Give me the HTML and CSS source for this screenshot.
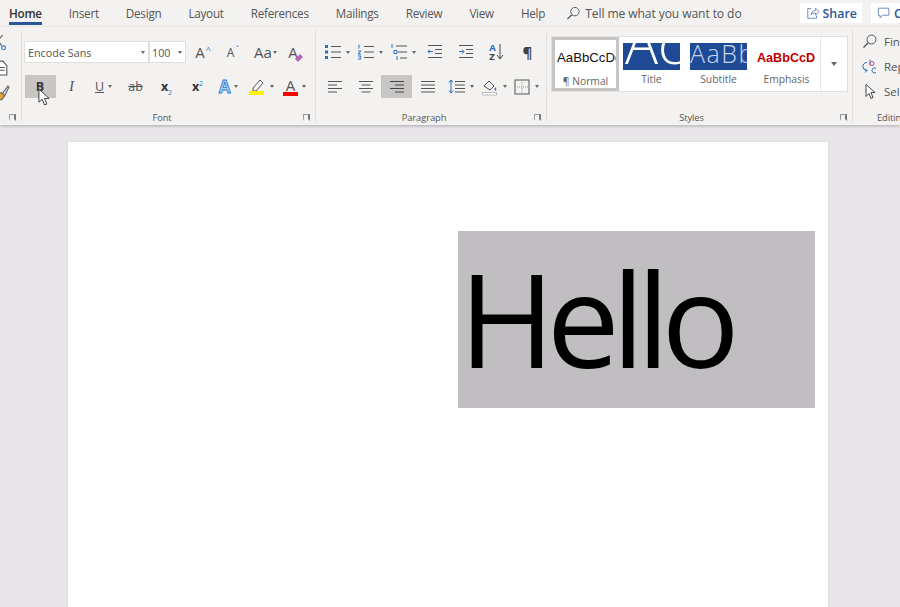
FILE: index.html
```html
<!DOCTYPE html>
<html lang="en">
<head>
    <meta charset="UTF-8">
    <title>Hello - Word</title>
    <link rel="stylesheet" href="styles.css">
</head>
<body>
    <div class="tabs">
        <span class="tab tab-active">Home</span>
        <span class="tab">Insert</span>
        <span class="tab">Design</span>
        <span class="tab">Layout</span>
        <span class="tab">References</span>
        <span class="tab">Mailings</span>
        <span class="tab">Review</span>
        <span class="tab">View</span>
        <span class="tab">Help</span>
        <span class="tell">
            <svg class="ico" viewBox="0 0 16 16"><circle cx="9.5" cy="6" r="4.5" fill="none" stroke="#555"/><path d="M6.2 9.3 1.5 14" stroke="#555" stroke-width="1.4"/></svg>
            Tell me what you want to do
        </span>
        <span class="top-btn share">
            <svg class="ico" viewBox="0 0 16 16"><path d="M6 3H2v11h10v-3" fill="none" stroke="#5a7fb5"/><path d="M6 10c0-3 2-5 5-5V2.500l4 4-4 4V8c-2 0-4 .5-5 2z" fill="none" stroke="#5a7fb5"/></svg>
            Share
        </span>
        <span class="top-btn comments">
            <svg class="ico" viewBox="0 0 16 16"><path d="M1.500 2.500h12v8h-7l-3 3v-3h-2z" fill="none" stroke="#5a7fb5"/></svg>
            Comments
        </span>
    </div>

    <div class="ribbon">
        <section class="group clipboard">
            <div class="clip-icons">
                <svg class="ico" viewBox="0 0 16 16"><path d="M2 1l6 10M9 1 3 8" stroke="#555" fill="none"/><circle cx="10" cy="13" r="1.800" fill="none" stroke="#2b7cd3"/></svg>
                <svg class="ico" viewBox="0 0 16 16"><path d="M3 2h6l4 4v9H3z" fill="#fff" stroke="#555"/><path d="M5 8h6M5 10.500h6" stroke="#555"/></svg>
                <svg class="ico" viewBox="0 0 16 16"><path d="M9 9 14 2l1 1-4 8z" fill="none" stroke="#555"/><path d="M3 10l5-2 3 3-3 4-6-1z" fill="#f0a030" stroke="#666"/></svg>
            </div>
            <div class="group-foot">
                <span></span><span></span><span class="launcher"></span>
            </div>
        </section>

        <section class="group font">
            <div class="row row-top font-top">
                <div class="select font-name">Encode Sans<i class="caret"></i></div>
                <div class="select font-size">100<i class="caret"></i></div>
                <span class="btn grow"><b class="glyph">A</b><sup class="mini">^</sup></span>
                <span class="btn shrink"><b class="glyph small">A</b><sup class="mini">ˇ</sup></span>
                <span class="btn case"><b class="glyph">Aa</b><i class="caret"></i></span>
                <span class="btn clear">
                    <b class="glyph">A</b>
                    <svg class="eraser" viewBox="0 0 10 10"><path d="M1 6l5-5 3 3-5 5z" fill="#b565b5"/></svg>
                </span>
            </div>
            <div class="row row-bottom">
                <span class="btn w31 pressed"><b class="glyph-b">B</b></span>
                <span class="btn w31"><em class="glyph-i">I</em></span>
                <span class="btn w33"><u class="glyph-u">U</u><i class="caret"></i></span>
                <span class="btn w31"><s class="glyph-s">ab</s></span>
                <span class="btn w31"><b class="glyph-x">x<sub>2</sub></b></span>
                <span class="btn w31"><b class="glyph-x">x<sup>2</sup></b></span>
                <span class="btn w31"><b class="glyph-fx">A</b><i class="caret"></i></span>
                <span class="btn w34">
                    <svg class="ico" viewBox="0 0 18 18"><path d="M5 10l7-8 3 3-7 8H5z" fill="none" stroke="#555"/><rect x="1" y="13" width="15" height="4" fill="#fff200"/></svg>
                    <i class="caret"></i>
                </span>
                <span class="btn w33">
                    <span class="font-color">A</span>
                    <i class="caret"></i>
                </span>
            </div>
            <div class="group-foot">
                <span></span><span class="group-name">Font</span><span class="launcher"></span>
            </div>
        </section>

        <section class="group paragraph">
            <div class="row row-top para-top">
                <span class="btn w33">
                    <svg class="ico" viewBox="0 0 18 18"><path d="M7 3.500h10M7 9h10M7 14.500h10" stroke="#555"/><path d="M1 2h3v3H1zM1 7.500h3v3H1zM1 13h3v3H1z" fill="#2b6cc4"/></svg>
                    <i class="caret"></i>
                </span>
                <span class="btn w33">
                    <svg class="ico" viewBox="0 0 18 18"><path d="M7 3.500h10M7 9h10M7 14.500h10" stroke="#555"/><path d="M2 1.500v4M1 8h3l-3 3h3M1 13h3l-1 1.500 1 1.500H1" stroke="#2b6cc4" fill="none"/></svg>
                    <i class="caret"></i>
                </span>
                <span class="btn w33">
                    <svg class="ico" viewBox="0 0 18 18"><path d="M6 3h11M8 9h9M10 15h7" stroke="#555"/><path d="M2 1v4M4 7.500h3v3H4zM7 13v4" stroke="#2b6cc4" fill="none"/></svg>
                    <i class="caret"></i>
                </span>
                <span class="btn w31">
                    <svg class="ico" viewBox="0 0 18 18"><path d="M2 2.500h14M9 6.500h7M9 10.500h7M2 14.500h14" stroke="#555"/><path d="M7 8.500H2m2-2-2 2 2 2" stroke="#2b6cc4" fill="none"/></svg>
                </span>
                <span class="btn w31">
                    <svg class="ico" viewBox="0 0 18 18"><path d="M2 2.500h14M9 6.500h7M9 10.500h7M2 14.500h14" stroke="#555"/><path d="M2 8.500h5m-2-2 2 2-2 2" stroke="#2b6cc4" fill="none"/></svg>
                </span>
                <span class="btn w31 sort">
                    <span class="sort-letters"><span class="sort-a">A</span><span>Z</span></span>
                    <svg class="sort-arrow" viewBox="0 0 8 18"><path d="M4 1v15M1 12l3 4 3-4" fill="none" stroke="#444"/></svg>
                </span>
                <span class="btn w31"><b class="glyph-p">¶</b></span>
            </div>
            <div class="row row-bottom para-bottom">
                <span class="btn w31">
                    <svg class="ico" viewBox="0 0 18 18"><path d="M2 3.500h14M2 7h9M2 10.500h14M2 14h9" stroke="#555"/></svg>
                </span>
                <span class="btn w31">
                    <svg class="ico" viewBox="0 0 18 18"><path d="M2 3.500h14M4.500 7h9M2 10.500h14M4.500 14h9" stroke="#555"/></svg>
                </span>
                <span class="btn w31 pressed">
                    <svg class="ico" viewBox="0 0 18 18"><path d="M2 3.500h14M7 7h9M2 10.500h14M7 14h9" stroke="#444"/></svg>
                </span>
                <span class="btn w31">
                    <svg class="ico" viewBox="0 0 18 18"><path d="M2 3.500h14M2 7h14M2 10.500h14M2 14h14" stroke="#555"/></svg>
                </span>
                <span class="btn w35">
                    <svg class="ico" viewBox="0 0 18 18"><path d="M7 3.500h10M7 7h10M7 10.500h10M7 14h10" stroke="#555"/><path d="M3 2v13M1 4.500l2-2.500 2 2.500M1 12.500 3 15l2-2.500" fill="none" stroke="#2b6cc4"/></svg>
                    <i class="caret"></i>
                </span>
                <span class="btn w31">
                    <svg class="ico" viewBox="0 0 18 18"><path d="M3 8l5-5 5 5-4 4z" fill="none" stroke="#555"/><path d="M14 9c1 1.500 2 2.500 1 3.500s-2-.5-1-3.500z" fill="#2b6cc4"/><rect x="1.500" y="14.500" width="14" height="2.500" fill="#fff" stroke="#bbb"/></svg>
                    <i class="caret"></i>
                </span>
                <span class="btn w33">
                    <svg class="ico" viewBox="0 0 18 18"><rect x="2" y="2" width="14" height="14" fill="none" stroke="#555"/><path d="M9 2v14M2 9h14" stroke="#999" stroke-dasharray="1 1"/></svg>
                    <i class="caret"></i>
                </span>
            </div>
            <div class="group-foot">
                <span></span><span class="group-name">Paragraph</span><span class="launcher"></span>
            </div>
        </section>

        <section class="group styles">
            <div class="gallery">
                <div class="style-item style-normal">
                    <div class="preview preview-normal">AaBbCcDd</div>
                    <div class="style-name">¶ Normal</div>
                </div>
                <div class="style-item style-title">
                    <div class="preview swatch swatch-title">Ac</div>
                    <div class="style-name">Title</div>
                </div>
                <div class="style-item style-subtitle">
                    <div class="preview swatch swatch-subtitle">AaBbC</div>
                    <div class="style-name">Subtitle</div>
                </div>
                <div class="style-item style-emphasis">
                    <div class="preview preview-emphasis">AaBbCcD</div>
                    <div class="style-name">Emphasis</div>
                </div>
                <div class="gallery-more"><i class="caret caret-big"></i></div>
            </div>
            <div class="group-foot">
                <span></span><span class="group-name">Styles</span><span class="launcher"></span>
            </div>
        </section>

        <section class="group editing">
            <div class="edit-list">
                <div class="edit-item">
                    <svg class="ico" viewBox="0 0 16 16"><circle cx="9.500" cy="6" r="4.500" fill="none" stroke="#555"/><path d="M6.200 9.300 1.500 14" stroke="#555" stroke-width="1.400"/></svg>
                    Find
                </div>
                <div class="edit-item">
                    <svg class="ico" viewBox="0 0 16 16"><path d="M5 4C2 4 1 6 1 8s1 4 4 4" fill="none" stroke="#2b6cc4"/><path d="M3 10l2 2-2 2" fill="none" stroke="#2b6cc4"/><path d="M8 1v6" stroke="#a04fa0"/><circle cx="10" cy="5" r="2" fill="none" stroke="#a04fa0"/><path d="M14 10a2.500 2.500 0 1 0 0 4" fill="none" stroke="#2b6cc4"/></svg>
                    Replace
                </div>
                <div class="edit-item">
                    <svg class="ico" viewBox="0 0 16 16"><path d="M4 1v12l3-3 2 5 2-1-2-5h4z" fill="#fff" stroke="#444"/></svg>
                    Select
                </div>
            </div>
            <div class="group-foot editing-foot">
                <span class="group-name">Editing</span>
            </div>
        </section>
    </div>

    <div class="workspace">
        <div class="page">
            <div class="selection">Hello</div>
        </div>
    </div>

    <svg class="cursor" viewBox="0 0 14 20"><path d="M1 1v14l3.500-3 2.500 6 2.500-1-2.500-6H12z" fill="#fff" stroke="#333"/></svg>
</body>
</html>
```

FILE: styles.css
```css
* {
    box-sizing: border-box;
}
html, body {
    height: 100%;
}
body {
    margin: 0;
    display: flex;
    flex-direction: column;
    overflow: hidden;
    background: #e7e5e7;
    color: #444;
    font-family: "Open Sans", sans-serif;
    font-size: 12px;
}
.ico {
    width: 18px;
    height: 18px;
    flex: none;
}
.caret {
    width: 0;
    height: 0;
    flex: none;
    border: 2.5px solid transparent;
    border-top: 3px solid #666;
    border-bottom: 0;
}

/* tab strip */
.tabs {
    height: 27px;
    flex: none;
    display: flex;
    align-items: flex-start;
    gap: 27px;
    padding-left: 9px;
    background: #f3f2f1;
    white-space: nowrap;
}
.tab {
    height: 25px;
    line-height: 27px;
    font-size: 11.7px;
    letter-spacing: -0.25px;
    color: #555;
}
.tab-active {
    color: #333;
    font-weight: 600;
    border-bottom: 3px solid #2b579a;
}
.tell {
    display: flex;
    align-items: center;
    gap: 4px;
    height: 27px;
    margin-left: -6px;
    font-size: 12.1px;
    letter-spacing: -0.1px;
    color: #555;
}
.tell .ico {
    width: 15px;
    height: 15px;
}
.top-btn {
    display: flex;
    align-items: center;
    gap: 3px;
    height: 20px;
    margin-top: 3px;
    padding: 0 5px 0 6px;
    background: #fff;
    color: #2b579a;
    font-size: 12.4px;
    font-weight: 600;
}
.top-btn .ico {
    width: 14px;
    height: 14px;
}
.share {
    margin-left: 31px;
}
.comments {
    margin-left: -18px;
}

/* ribbon */
.ribbon {
    height: 98px;
    flex: none;
    display: flex;
    padding: 3px 0;
    background: #f3f2f1;
    box-shadow: 0 1px 3px rgba(0, 0, 0, 0.25);
    position: relative;
}
.group {
    flex: none;
    display: flex;
    flex-direction: column;
    border-right: 1px solid #e1dfdd;
}
.clipboard {
    width: 22px;
    overflow: hidden;
}
.font {
    width: 294px;
    padding-left: 3px;
}
.paragraph {
    width: 231px;
    padding-left: 2px;
}
.styles {
    width: 306px;
}
.editing {
    width: 120px;
    border-right: 0;
}
.row {
    display: flex;
    align-items: center;
}
.row-top {
    height: 22px;
    margin-top: 11px;
}
.row-bottom {
    height: 23px;
    margin-top: 12px;
}
.font-top {
    margin-left: -1px;
}
.para-top {
    margin-left: 2px;
}
.para-bottom {
    margin-left: 1px;
}
.group-foot {
    display: grid;
    grid-template-columns: 1fr auto 1fr;
    align-items: center;
    height: 14px;
    margin-top: auto;
    margin-bottom: -2px;
}
.group-name {
    margin-left: -16px;
    font-size: 9.4px;
    letter-spacing: -0.1px;
    color: #555;
}
.launcher {
    justify-self: end;
    width: 7px;
    height: 7px;
    margin-right: 5px;
    border-top: 1px solid #999;
    border-left: 1px solid #999;
    border-bottom: 2px solid transparent;
    border-right: 2px solid #777;
}

/* clipboard */
.clip-icons {
    display: flex;
    flex-direction: column;
    align-items: flex-end;
    gap: 8px;
    margin-top: 4px;
    margin-left: -18px;
    width: 28px;
}
.clip-icons .ico {
    width: 17px;
    height: 17px;
}

/* font group */
.select {
    display: flex;
    align-items: center;
    justify-content: space-between;
    height: 22px;
    padding: 0 3px;
    background: #fff;
    border: 1px solid #e1dfdd;
    font-size: 10.8px;
    color: #555;
}
.font-name {
    width: 125px;
}
.font-size {
    width: 37px;
    padding-left: 2px;
}
.btn {
    display: flex;
    align-items: center;
    justify-content: center;
    gap: 4px;
    height: 100%;
    flex: none;
    position: relative;
}
.w31 {
    width: 31px;
}
.w33 {
    width: 33px;
}
.w34 {
    width: 34px;
}
.w35 {
    width: 35px;
}
.pressed {
    background: #c8c6c4;
}
.glyph {
    font-weight: 400;
    font-size: 15px;
    color: #555;
}
.glyph.small {
    font-size: 12px;
}
.mini {
    font-size: 9px;
    line-height: 1;
    color: #2b6cc4;
    margin: -6px 0 0 -3px;
}
.grow {
    width: 30px;
    margin-left: 2px;
}
.shrink {
    width: 30px;
}
.case {
    width: 35px;
    gap: 1px;
}
.clear {
    width: 20px;
}
.eraser {
    position: absolute;
    left: 11px;
    top: 12px;
    width: 10px;
    height: 10px;
}
.glyph-b {
    font-size: 12.5px;
    color: #333;
    margin-right: 1px;
}
.glyph-i {
    font-family: "Liberation Serif", serif;
    font-size: 15px;
    color: #555;
}
.glyph-u {
    font-size: 12.5px;
    color: #555;
}
.glyph-s {
    font-size: 12.5px;
    color: #555;
}
.glyph-x {
    font-size: 12.5px;
    color: #333;
}
.glyph-x sub, .glyph-x sup {
    font-size: 7px;
    font-weight: 400;
    color: #2b7cd3;
    line-height: 0;
}
.glyph-fx {
    font-size: 17px;
    color: #a8cdf0;
    -webkit-text-stroke: 0.8px #2b7cd3;
}
.font-color {
    display: inline-block;
    width: 15px;
    height: 18px;
    line-height: 14px;
    text-align: center;
    font-size: 15px;
    color: #555;
    border-bottom: 4px solid #ff0000;
}

/* paragraph group */
.sort {
    gap: 0;
}
.sort-letters {
    display: flex;
    flex-direction: column;
    font-size: 9.5px;
    font-weight: 700;
    line-height: 9px;
    color: #444;
}
.sort-a {
    color: #2b6cc4;
}
.sort-arrow {
    width: 8px;
    height: 18px;
}
.glyph-p {
    font-size: 15px;
    color: #444;
}

/* styles gallery */
.gallery {
    display: flex;
    height: 56px;
    width: 297px;
    margin: 6px 0 0 4px;
    background: #fff;
    border: 1px solid #e1dfdd;
}
.style-item {
    display: flex;
    flex-direction: column;
    align-items: center;
    overflow: hidden;
}
.style-normal {
    width: 67px;
    border: 3px solid #c8c6c4;
    height: 100%;
}
.style-title {
    width: 57px;
    margin: 6px 0 0 4px;
}
.style-subtitle {
    width: 57px;
    margin: 6px 0 0 10px;
}
.style-emphasis {
    width: 59px;
    margin: 6px 0 0 10px;
}
.preview {
    width: 100%;
    height: 27px;
    overflow: hidden;
    white-space: nowrap;
}
.preview-normal {
    height: 31px;
    padding: 10px 0 0 2px;
    font-family: "Liberation Sans", sans-serif;
    font-size: 13.2px;
    color: #111;
}
.style-normal .style-name {
    margin-top: 3px;
}
.swatch {
    background: #1f4a96;
    color: #fff;
}
.swatch-title {
    font-weight: 300;
    font-size: 55px;
    line-height: 0;
    padding-left: 2px;
}
.swatch-subtitle {
    font-weight: 300;
    font-size: 25px;
    line-height: 21px;
    letter-spacing: 1.5px;
    color: #c9d6ee;
}
.preview-emphasis {
    padding-top: 2px;
    font-family: "Liberation Sans", sans-serif;
    font-weight: 700;
    font-size: 12.6px;
    line-height: 27px;
    color: #c00000;
}
.style-name {
    margin-top: 2px;
    font-size: 10.3px;
    color: #666;
}
.gallery-more {
    display: flex;
    align-items: center;
    justify-content: center;
    width: 27px;
    margin-left: auto;
    border-left: 1px solid #e8e6e4;
}
.caret-big {
    border-width: 3.5px;
    border-top-width: 4px;
}

/* editing group */
.edit-list {
    display: flex;
    flex-direction: column;
    gap: 8px;
    margin: 3px 0 0 9px;
}
.edit-item {
    display: flex;
    align-items: center;
    gap: 6px;
    font-size: 11.5px;
    color: #555;
    white-space: nowrap;
}
.edit-item .ico {
    width: 16px;
    height: 17px;
}
.editing-foot {
    display: flex;
    padding-left: 40px;
    white-space: nowrap;
}

/* document */
.workspace {
    flex: 1;
    min-height: 0;
    padding: 16px 0 0 67px;
    overflow: hidden;
}
.page {
    display: flex;
    justify-content: flex-end;
    width: 762px;
    height: 600px;
    padding: 89px 13px 0 0;
    background: #fff;
    border: 1px solid #e1e0e1;
    border-width: 1px 1px 0 1px;
}
.selection {
    width: 357px;
    height: 177px;
    padding-left: 1px;
    background: #c0bec1;
    color: #000;
    font-size: 130px;
    line-height: 173px;
    letter-spacing: -8px;
    white-space: nowrap;
    overflow: hidden;
}

/* mouse pointer sits over the Bold button */
.cursor {
    position: absolute;
    left: 38px;
    top: 88px;
    width: 13px;
    height: 19px;
}
```
